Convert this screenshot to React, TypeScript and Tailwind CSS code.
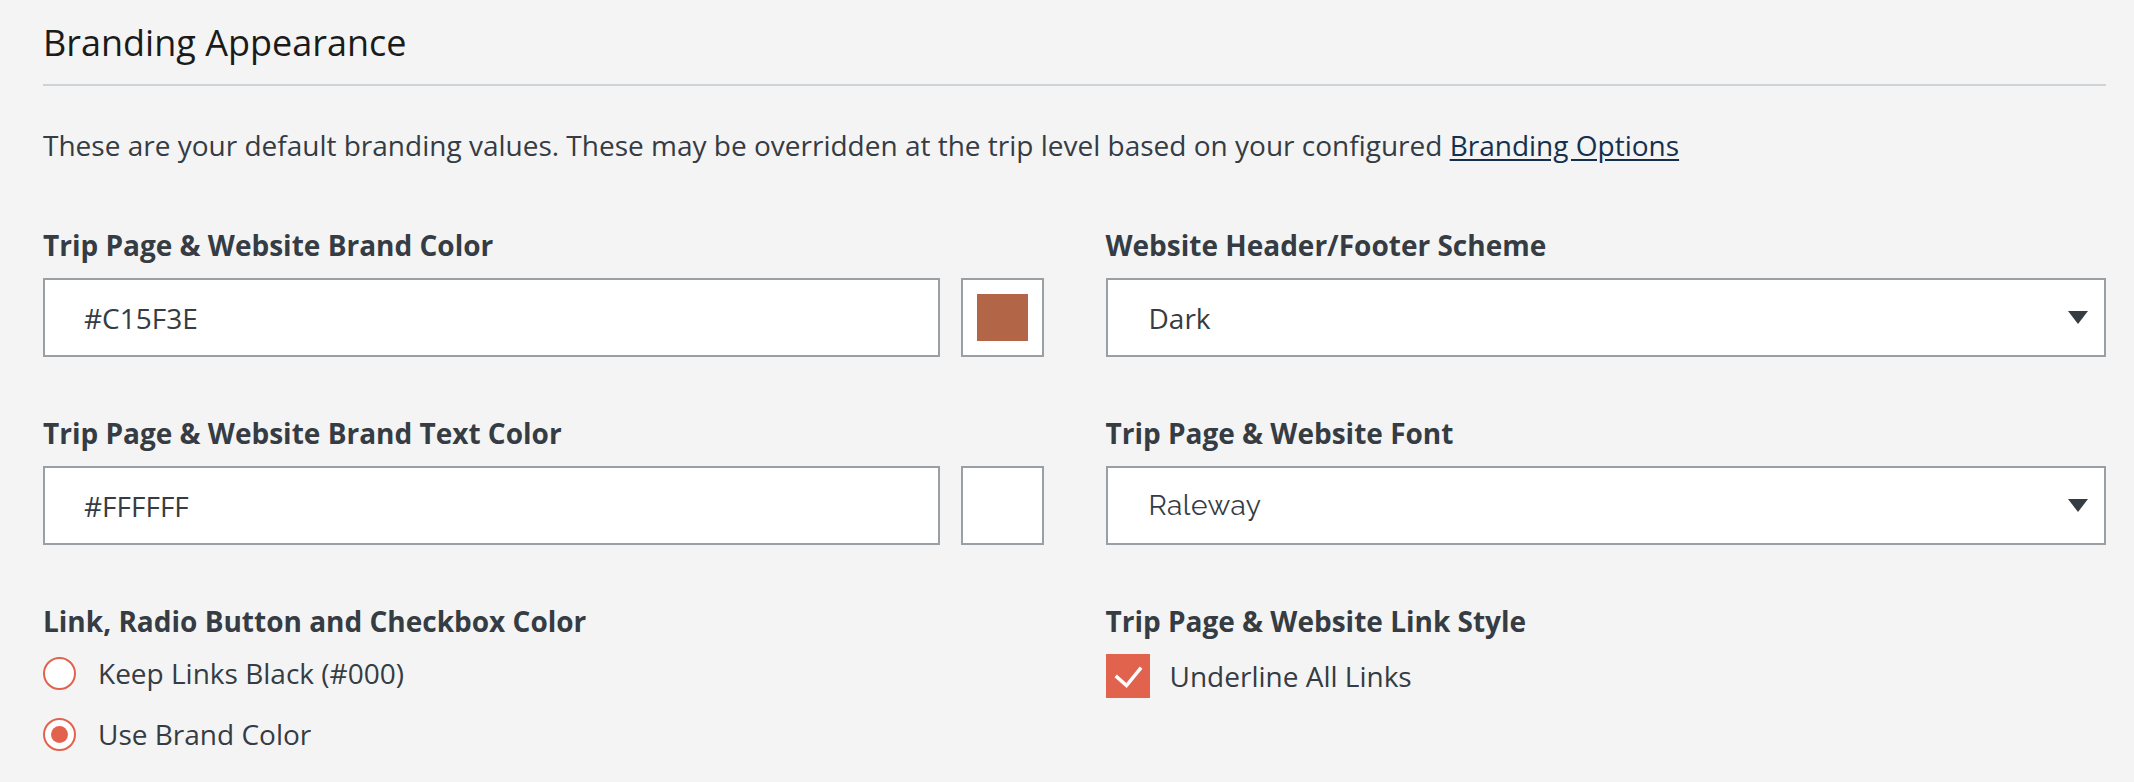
import React from "react";

const font = { fontFamily: '"Open Sans", "Noto Sans", sans-serif' };

function Label({ children }: { children: React.ReactNode }) {
  return (
    <div className="text-[28px] leading-[38px] font-bold text-[#353c43] whitespace-nowrap">
      {children}
    </div>
  );
}

function ColorField({ value, swatch }: { value: string; swatch: string }) {
  return (
    <div className="mt-[14px] flex gap-[21px]">
      <input
        readOnly
        value={value}
        className="flex-1 min-w-0 h-[79px] border-2 border-[#9a9fa3] bg-white px-[39px] text-[28px] text-[#353c43] outline-none"
        style={font}
      />
      <div className="w-[83px] h-[79px] shrink-0 border-2 border-[#9a9fa3] bg-white p-[14px]">
        <div className="w-full h-full" style={{ backgroundColor: swatch }} />
      </div>
    </div>
  );
}

function SelectField({ value, fontClass }: { value: string; fontClass?: string }) {
  return (
    <div className="mt-[14px] h-[79px] border-2 border-[#9a9fa3] bg-white pl-[41px] pr-[16px] flex items-center justify-between">
      <span className={`text-[28px] text-[#353c43] ${fontClass ?? ""}`}>{value}</span>
      <svg width="20" height="13" viewBox="0 0 20 13" aria-hidden="true">
        <polygon points="0,0 20,0 10,13" fill="#353c43" />
      </svg>
    </div>
  );
}

function Radio({ checked, label }: { checked?: boolean; label: string }) {
  return (
    <div className="flex items-center gap-[22px] h-[38px]">
      <span className="w-[33px] h-[33px] rounded-full border-2 border-[#e1634e] bg-white flex items-center justify-center shrink-0">
        {checked && <span className="w-[17px] h-[17px] rounded-full bg-[#e1634e]" />}
      </span>
      <span className="text-[28px] leading-[38px] text-[#353c43]">{label}</span>
    </div>
  );
}

export default function App() {
  return (
    <div className="min-h-[782px] w-full bg-[#f4f4f4]" style={font}>
      <div className="pl-[43px] pr-[28px] pt-[18px] pb-[20px]">
        <h1 className="text-[36px] leading-[49px] font-normal text-[#1b1b1b] pb-[17px] border-b-2 border-[#cdd3d6]">
          Branding Appearance
        </h1>
        <p className="mt-[40px] text-[28px] leading-[38px] text-[#353c43] whitespace-nowrap">
          These are your default branding values. These may be overridden at the trip level based on your configured{" "}
          <a href="#" className="text-[#15304f] underline underline-offset-[3px]">
            Branding Options
          </a>
        </p>

        <div className="mt-[62px] grid grid-cols-2 gap-x-[62px] gap-y-[57px]">
          <div>
            <Label>Trip Page &amp; Website Brand Color</Label>
            <ColorField value="#C15F3E" swatch="#b36547" />
          </div>
          <div>
            <Label>Website Header/Footer Scheme</Label>
            <SelectField value="Dark" />
          </div>

          <div>
            <Label>Trip Page &amp; Website Brand Text Color</Label>
            <ColorField value="#FFFFFF" swatch="#ffffff" />
          </div>
          <div>
            <Label>Trip Page &amp; Website Font</Label>
            <SelectField value="Raleway" fontClass="font-['Raleway','Lato',sans-serif] tracking-[0.5px]" />
          </div>

          <div>
            <Label>Link, Radio Button and Checkbox Color</Label>
            <div className="mt-[14px] flex flex-col gap-[23px]">
              <Radio label="Keep Links Black (#000)" />
              <Radio checked label="Use Brand Color" />
            </div>
          </div>
          <div>
            <Label>Trip Page &amp; Website Link Style</Label>
            <div className="mt-[14px] flex items-center gap-[20px]">
              <span className="w-[44px] h-[44px] bg-[#e1634e] flex items-center justify-center shrink-0">
                <svg width="44" height="44" viewBox="0 0 44 44" aria-hidden="true">
                  <path d="M11 23 L20.5 31.5 L34 15" fill="none" stroke="#ffffff" strokeWidth="3.5" strokeLinecap="square" />
                </svg>
              </span>
              <span className="text-[28px] leading-[38px] text-[#353c43]">Underline All Links</span>
            </div>
          </div>
        </div>
      </div>
    </div>
  );
}
